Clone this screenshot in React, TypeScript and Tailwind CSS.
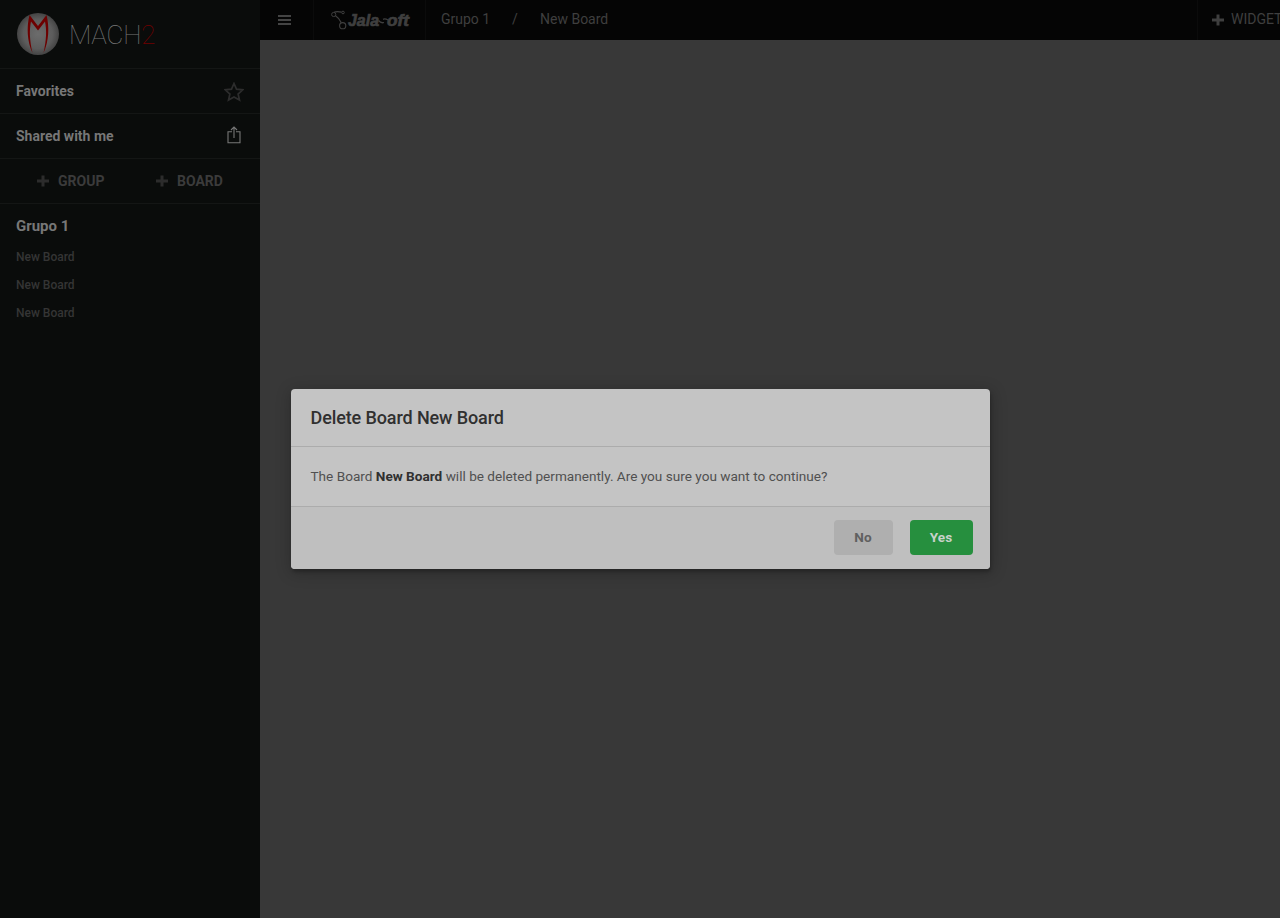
function Plus({ className }: { className: string }) {
  return (
    <svg viewBox="0 0 12 12" className={className} width="12" height="12" fill="currentColor">
      <path d="M4.500 .5h3v4H12v3H7.500v4h-3v-4H0v-3h4.500z" />
    </svg>
  );
}

function MachLogo() {
  return (
    <svg width="42" height="42" viewBox="0 0 42 42">
      <defs>
        <radialGradient id="ball" cx="50%" cy="50%" r="50%">
          <stop offset="0" stopColor="#6c6c6c" />
          <stop offset=".7" stopColor="#5c5c5c" />
          <stop offset="1" stopColor="#444" />
        </radialGradient>
      </defs>
      <circle cx="21" cy="21" r="21" fill="url(#ball)" />
      <path
        fill="#6d0000"
        d="M12.500 2 21 13 29.500 2C32.500 14 32 28 26.500 40C29.500 27 29.800 17 28 8.500L21 17.500 14 8.500C12.200 17 12.500 27 15.500 40C10 28 9.500 14 12.500 2Z"
      />
    </svg>
  );
}

function JalaLogo() {
  return (
    <svg width="80" height="20" viewBox="0 0 80 20" fill="none" stroke="#3f3f3f">
      <circle cx="2.700" cy="4.500" r="2.100" strokeWidth="1" />
      <circle cx="12" cy="2.500" r="1.300" strokeWidth="1" />
      <circle cx="11.700" cy="15.700" r="3.100" strokeWidth="1.100" />
      <path d="M3 2.300Q6 1 10.500 2.200M4.500 5.800Q8 8 10.300 12.700" strokeWidth="1.200" />
      <text x="17" y="15.500" textLength="31" lengthAdjust="spacingAndGlyphs" fontSize="16" fontWeight="900" fontStyle="italic" fontFamily="Liberation Sans, sans-serif" fill="#3f3f3f" strokeWidth=".7">Jala</text>
      <path d="M47.500 10.500Q50 13.500 53 12.500M52 9.300Q54 8.300 57 10" strokeWidth="1.300" />
      <text x="56" y="15.500" textLength="22" lengthAdjust="spacingAndGlyphs" fontSize="16" fontWeight="900" fontStyle="italic" fontFamily="Liberation Sans, sans-serif" fill="#3f3f3f" strokeWidth=".7">oft</text>
    </svg>
  );
}

function Sidebar() {
  return (
    <aside className="w-[260px] shrink-0 bg-[#0a0c0b] text-[#777]">
      <div className="flex h-[69px] items-center border-b border-[#141615] pl-[17px]">
        <MachLogo />
        <div className="ml-[10px] mt-px text-[26px] font-thin leading-none tracking-[-0.2px] text-[#777]">
          MACH<span className="text-[#710000]">2</span>
        </div>
      </div>
      <div className="flex h-[45px] items-center justify-between border-b border-[#141615] px-4 text-sm font-bold">
        <span>Favorites</span>
        <svg className="mt-0.5" width="20" height="20" viewBox="0 0 20 20" fill="none" stroke="#2d2d2d" strokeWidth="1.700">
          <path d="M10 1.500 12.500 7.200 18.800 7.800 14.100 12 15.500 18 10 14.900 4.500 18 5.900 12 1.200 7.800 7.500 7.200Z" />
        </svg>
      </div>
      <div className="flex h-[45px] items-center justify-between border-b border-[#141615] pl-4 pr-[19px] text-sm font-bold">
        <span>Shared with me</span>
        <svg className="mb-0.5" width="14" height="18" viewBox="0 0 14 18" fill="none" stroke="#777" strokeWidth="1.100">
          <path d="M5 5.800H1v11h12v-11H9M7 12V1M4 4 7 1l3 3" />
        </svg>
      </div>
      <div className="flex h-[45px] items-center border-b border-[#141615] pl-[37px] text-sm font-bold text-[#3b3b3b]">
        <Plus className="mr-[9px] text-[#2c2c2c]" />
        <span className="w-[98px]">GROUP</span>
        <Plus className="mr-[9px] text-[#2c2c2c]" />
        <span>BOARD</span>
      </div>
      <div className="px-4 pt-3">
        <div className="text-[15px] font-bold leading-5">Grupo 1</div>
        <div className="mt-[7px] text-xs font-medium leading-7 text-[#353535]">
          <div>New Board</div>
          <div>New Board</div>
          <div>New Board</div>
        </div>
      </div>
    </aside>
  );
}

function Topbar() {
  return (
    <header className="flex h-10 overflow-hidden bg-[#050505] text-sm text-[#3f3f3f]">
      <div className="flex w-[54px] shrink-0 items-center border-r border-[#0b0b0b] pl-[18px]">
        <svg width="13" height="10" viewBox="0 0 13 10" fill="#444">
          <path d="M0 0h13v2H0zM0 4h13v2H0zM0 8h13v2H0z" />
        </svg>
      </div>
      <div className="flex w-[112px] shrink-0 items-center border-r border-[#0b0b0b] pl-[17px]">
        <JalaLogo />
      </div>
      <div className="flex shrink-0 items-center pb-0.5 pl-[15px]">
        <span className="w-[71px]">Grupo 1</span>
        <span className="w-[28px]">/</span>
        <span>New Board</span>
      </div>
      <div className="ml-auto flex w-[83px] shrink-0 items-center border-l border-[#0b0b0b] pl-[14px]">
        <Plus className="mr-[7px] shrink-0" />
        <span className="whitespace-nowrap pb-0.5">WIDGET</span>
      </div>
    </header>
  );
}

function DeleteDialog() {
  return (
    <section className="h-[180px] w-[699px] overflow-hidden rounded-[4px] bg-[#c4c4c4] shadow-[1px_3px_3px_rgba(0,0,0,0.2),1px_3px_15px_2px_rgba(0,0,0,0.2)]">
      <h2 className="h-[58px] border-b border-[#acacac] pl-5 text-lg font-medium leading-[57px] tracking-[-0.11px] text-[#303030]">
        Delete Board New Board
      </h2>
      <p className="h-[60px] border-b border-[#acacac] pl-5 text-[13.600px] leading-[58px] text-[#505050]">
        The Board <b className="text-[#303030]">New Board</b> will be deleted permanently. Are you sure you want to continue?
      </p>
      <div className="flex h-[62px] justify-end gap-[17px] bg-[#bfbfbf] pr-[17px] pt-[13px] text-[13.600px] font-bold">
        <button className="h-[35px] w-[59px] rounded-[4px] bg-[#afafaf] text-[#606060]">No</button>
        <button className="h-[35px] w-[63px] rounded-[4px] bg-[#268f3e] text-[#c8d2ca]">Yes</button>
      </div>
    </section>
  );
}

export default function App() {
  return (
    <div className="relative flex h-[918px] w-[1280px] overflow-hidden bg-[#383838] font-[Roboto,sans-serif]">
      <Sidebar />
      <main className="min-w-0 flex-1">
        <Topbar />
      </main>
      <div className="absolute inset-0 flex items-start justify-center pt-[389px]">
        <DeleteDialog />
      </div>
    </div>
  );
}
